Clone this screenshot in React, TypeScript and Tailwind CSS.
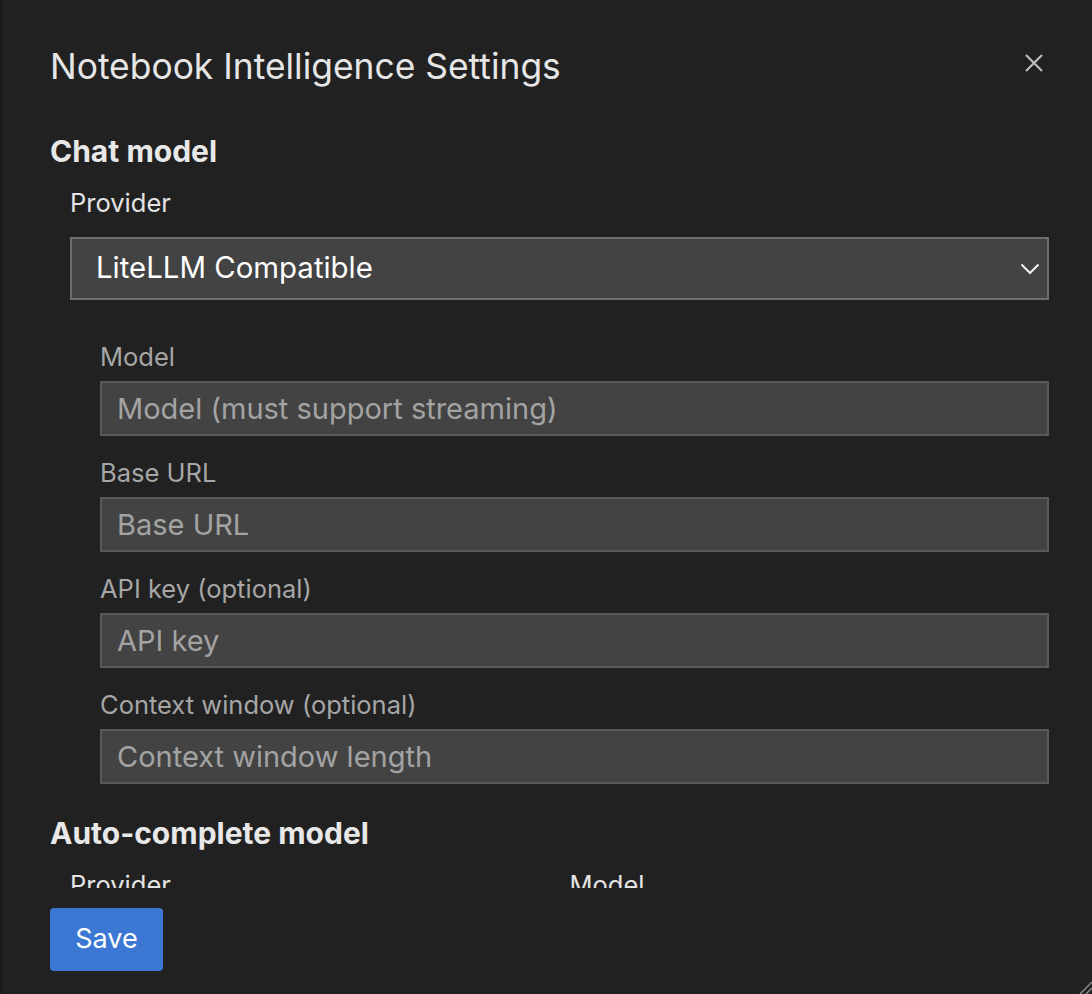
import React from "react";

const fieldLabel = "text-[25.5px] leading-[32px] text-[#a6a6a6]";
const fieldInput =
  "w-full h-[55px] border-2 border-[#595959] bg-[#434343] px-[15px] text-[29px] text-[#e0e0e0] placeholder:text-[#a3a3a3] outline-none";

function Field({ label, placeholder, first }: { label: string; placeholder: string; first?: boolean }) {
  return (
    <div className={first ? "flex flex-col" : "flex flex-col mt-[21px]"}>
      <label className={fieldLabel}>{label}</label>
      <input className={`mt-[8px] ${fieldInput}`} placeholder={placeholder} />
    </div>
  );
}

export default function App() {
  return (
    <div
      className="relative w-[1092px] h-[994px] bg-[#212121] border-l-2 border-[#191919] flex flex-col overflow-hidden"
      style={{ fontFamily: "Inter, 'Liberation Sans', sans-serif" }}
    >
      {/* Header */}
      <div className="flex items-center justify-between pl-[48px] pr-[47px] pt-[45px]">
        <h1 className="text-[35.4px] leading-[44px] text-[#e6e6e6] font-normal">
          Notebook Intelligence Settings
        </h1>
        <button className="w-[22px] h-[22px] flex items-center justify-center -mt-[8px] text-[#bdbdbd]">
          <svg width="20" height="20" viewBox="0 0 20 20" fill="none" stroke="currentColor" strokeWidth="2.2">
            <path d="M2 2L18 18M18 2L2 18" />
          </svg>
        </button>
      </div>

      <div className="h-[799px] shrink-0 overflow-hidden pl-[48px] pr-[43px] pt-[44px]">
        <h2 className="text-[30px] leading-[36px] font-bold text-[#e8e8e8]">Chat model</h2>

        <div className="pl-[20px] mt-[18px]">
          <label className="block text-[25.5px] leading-[32px] text-[#e4e4e4]">Provider</label>
          <div className="relative mt-[18px] h-[63px] border-2 border-[#6e6e6e] bg-[#434343] flex items-center pl-[24px]">
            <span className="text-[29.4px] text-white">LiteLLM Compatible</span>
            <svg
              className="absolute right-[7px] top-1/2 -translate-y-1/2"
              width="20"
              height="12"
              viewBox="0 0 20 12"
              fill="none"
              stroke="#f2f2f2"
              strokeWidth="2"
            >
              <path d="M1.5 1.5L10 10L18.5 1.5" />
            </svg>
          </div>

          <div className="pl-[30px] mt-[41px] flex flex-col">
            <Field first label="Model" placeholder="Model (must support streaming)" />
            <Field label="Base URL" placeholder="Base URL" />
            <Field label="API key (optional)" placeholder="API key" />
            <Field label="Context window (optional)" placeholder="Context window length" />
          </div>
        </div>

        <h2 className="mt-[31px] text-[30px] leading-[36px] font-bold text-[#e8e8e8]">
          Auto-complete model
        </h2>
        <div className="pl-[20px] mt-[18px] grid grid-cols-2 gap-x-[20px]">
          <span className="text-[25.5px] leading-[32px] text-[#e4e4e4]">Provider</span>
          <span className="text-[25.5px] leading-[32px] text-[#e4e4e4]">Model</span>
        </div>
      </div>

      {/* Footer */}
      <div className="pl-[48px] pt-[20px]">
        <button className="w-[113px] h-[63px] rounded-[4px] bg-[#3b77d3] text-white text-[27px]">
          Save
        </button>
      </div>

      {/* Resize grip */}
      <svg
        className="absolute right-0 bottom-0"
        width="14"
        height="14"
        viewBox="0 0 14 14"
        fill="none"
        stroke="#8a8a8a"
        strokeWidth="1.5"
      >
        <path d="M14 2L2 14M14 8L8 14" />
      </svg>
    </div>
  );
}
